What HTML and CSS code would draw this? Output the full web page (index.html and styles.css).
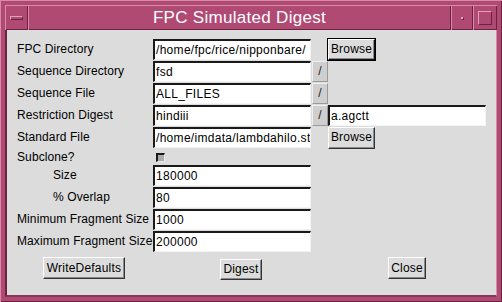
FILE: index.html
```html
<!DOCTYPE html>
<html>
<head>
<meta charset="utf-8">
<link rel="stylesheet" href="styles.css">
</head>
<body>
<div class="window">
  <div class="titlebar">
    <div class="tb-btn menu"><span class="dash"></span></div>
    <div class="title">FPC Simulated Digest</div>
    <div class="tb-btn min"><span class="dot"></span></div>
    <div class="tb-btn max"><span class="square"></span></div>
  </div>
  <div class="content">
    <div class="form">
      <div class="label">FPC Directory</div>
      <div class="field">/home/fpc/rice/nipponbare/</div>
      <div class="cell"></div>
      <div class="btn browse focus">Browse</div>

      <div class="label">Sequence Directory</div>
      <div class="field">fsd</div>
      <div class="slash">/</div>
      <div class="cell"></div>

      <div class="label">Sequence File</div>
      <div class="field">ALL_FILES</div>
      <div class="slash">/</div>
      <div class="cell"></div>

      <div class="label">Restriction Digest</div>
      <div class="field">hindiii</div>
      <div class="slash">/</div>
      <div class="field">a.agctt</div>

      <div class="label">Standard File</div>
      <div class="field">/home/imdata/lambdahilo.st</div>
      <div class="cell"></div>
      <div class="btn browse">Browse</div>

      <div class="label short">Subclone?</div>
      <div class="checkcell"><span class="check"></span></div>
      <div class="cell"></div>
      <div class="cell"></div>

      <div class="label indent">Size</div>
      <div class="field">180000</div>
      <div class="cell"></div>
      <div class="cell"></div>

      <div class="label indent">% Overlap</div>
      <div class="field">80</div>
      <div class="cell"></div>
      <div class="cell"></div>

      <div class="label">Minimum Fragment Size</div>
      <div class="field">1000</div>
      <div class="cell"></div>
      <div class="cell"></div>

      <div class="label">Maximum Fragment Size</div>
      <div class="field">200000</div>
      <div class="cell"></div>
      <div class="cell"></div>
    </div>
    <div class="actions">
      <div class="btn action write">WriteDefaults</div>
      <div class="btn action digest">Digest</div>
      <div class="btn action close">Close</div>
    </div>
  </div>
</div>
</body>
</html>
```

FILE: styles.css
```css
html, body {
  margin: 0;
  padding: 0;
  background: #b04a73;
}
.window {
  width: 502px;
  height: 302px;
  box-sizing: border-box;
  padding: 5px 5px 5px 5px;
  background: #b04a73;
  box-shadow: inset 1px 1px 0 #d88aaa, inset -1px -1px 0 #6a2343;
  display: flex;
  flex-direction: column;
  font-family: "Liberation Sans", Arial, sans-serif;
  font-size: 12px;
  color: #000;
}
.titlebar {
  height: 25px;
  display: flex;
  flex-direction: row;
  box-sizing: border-box;
}
.tb-btn {
  box-sizing: border-box;
  height: 25px;
  box-shadow: inset 1px 1px 0 #d88aaa, inset -1px -1px 0 #6a2343;
  display: flex;
  align-items: center;
  justify-content: center;
}
.menu { width: 23px; }
.min { width: 22px; }
.max { width: 24px; }
.dash {
  width: 13px;
  height: 4px;
  box-sizing: border-box;
  border: 1px solid;
  border-color: #e0a0ba #6a2343 #6a2343 #e0a0ba;
}
.dot {
  width: 2px;
  height: 2px;
  background: #e0a0ba;
  box-shadow: 1px 1px 0 #6a2343;
}
.square {
  width: 14px;
  height: 14px;
  box-sizing: border-box;
  border: 1px solid;
  border-color: #e0a0ba #6a2343 #6a2343 #e0a0ba;
}
.title {
  flex: 1;
  text-align: center;
  color: #fff;
  font-size: 17px;
  letter-spacing: 0.3px;
  line-height: 25px;
  box-shadow: inset 1px 1px 0 #d88aaa, inset -1px -1px 0 #6a2343;
}
.content {
  flex: 1;
  background: #dcdcdc;
  border-left: 2px solid #6a2343;
  border-top: 0;
  border-right: 1px solid #d88aaa;
  border-bottom: 2px solid #8a3358;
  padding: 9px 0 0 10px;
  box-sizing: border-box;
}
.form {
  display: grid;
  grid-template-columns: 136px 159px 16px 160px;
  grid-template-rows: repeat(5, 22px) 16px repeat(4, 22px);
}
.label {
  line-height: 21px;
  letter-spacing: 0.1px;
  white-space: nowrap;
  align-self: start;
}
.label.short {
  line-height: 16px;
}
.indent {
  padding-left: 36px;
}
.field {
  width: 158px;
  height: 21px;
  box-sizing: border-box;
  background: #fff;
  border-style: solid;
  border-width: 2px 1px 1px 2px;
  border-color: #1a1a1a #f4f4f4 #f4f4f4 #1a1a1a;
  padding-left: 1px;
  font-size: 12px;
  letter-spacing: 0.3px;
  line-height: 18px;
  white-space: nowrap;
  overflow: hidden;
}
.slash {
  width: 16px;
  height: 21px;
  box-sizing: border-box;
  background: #cfcfcf;
  border-style: solid;
  border-width: 1px;
  border-color: #f0f0f0 #9a9a9a #9a9a9a #f0f0f0;
  text-align: center;
  line-height: 19px;
  font-size: 12px;
  color: #222;
}
.checkcell {
  display: flex;
  align-items: center;
  padding-left: 3px;
}
.check {
  width: 9px;
  height: 9px;
  box-sizing: border-box;
  background: #ababab;
  border-style: solid;
  border-width: 2px 1px 1px 2px;
  border-color: #1a1a1a #e8e8e8 #e8e8e8 #1a1a1a;
}
.btn {
  box-sizing: border-box;
  background: #dcdcdc;
  border-style: solid;
  border-width: 1px;
  border-color: #ffffff #333333 #333333 #ffffff;
  box-shadow: inset -1px -1px 0 #8a8a8a;
  text-align: center;
  white-space: nowrap;
  letter-spacing: 0.2px;
}
.browse {
  width: 47px;
  height: 22px;
  line-height: 19px;
}
.browse.focus {
  height: 21px;
  line-height: 18px;
  outline: 1px solid #000;
  outline-offset: 0;
  border-color: #ffffff #111 #111 #ffffff;
}
.actions {
  display: flex;
  flex-direction: row;
  align-items: flex-start;
  margin-top: 4px;
}
.action {
  height: 22px;
  line-height: 20px;
}
.write {
  width: 82px;
  margin-left: 26px;
}
.digest {
  width: 42px;
  height: 21px;
  line-height: 19px;
  margin-top: 2px;
  margin-left: 95px;
}
.close {
  width: 38px;
  margin-left: 126px;
}
```
